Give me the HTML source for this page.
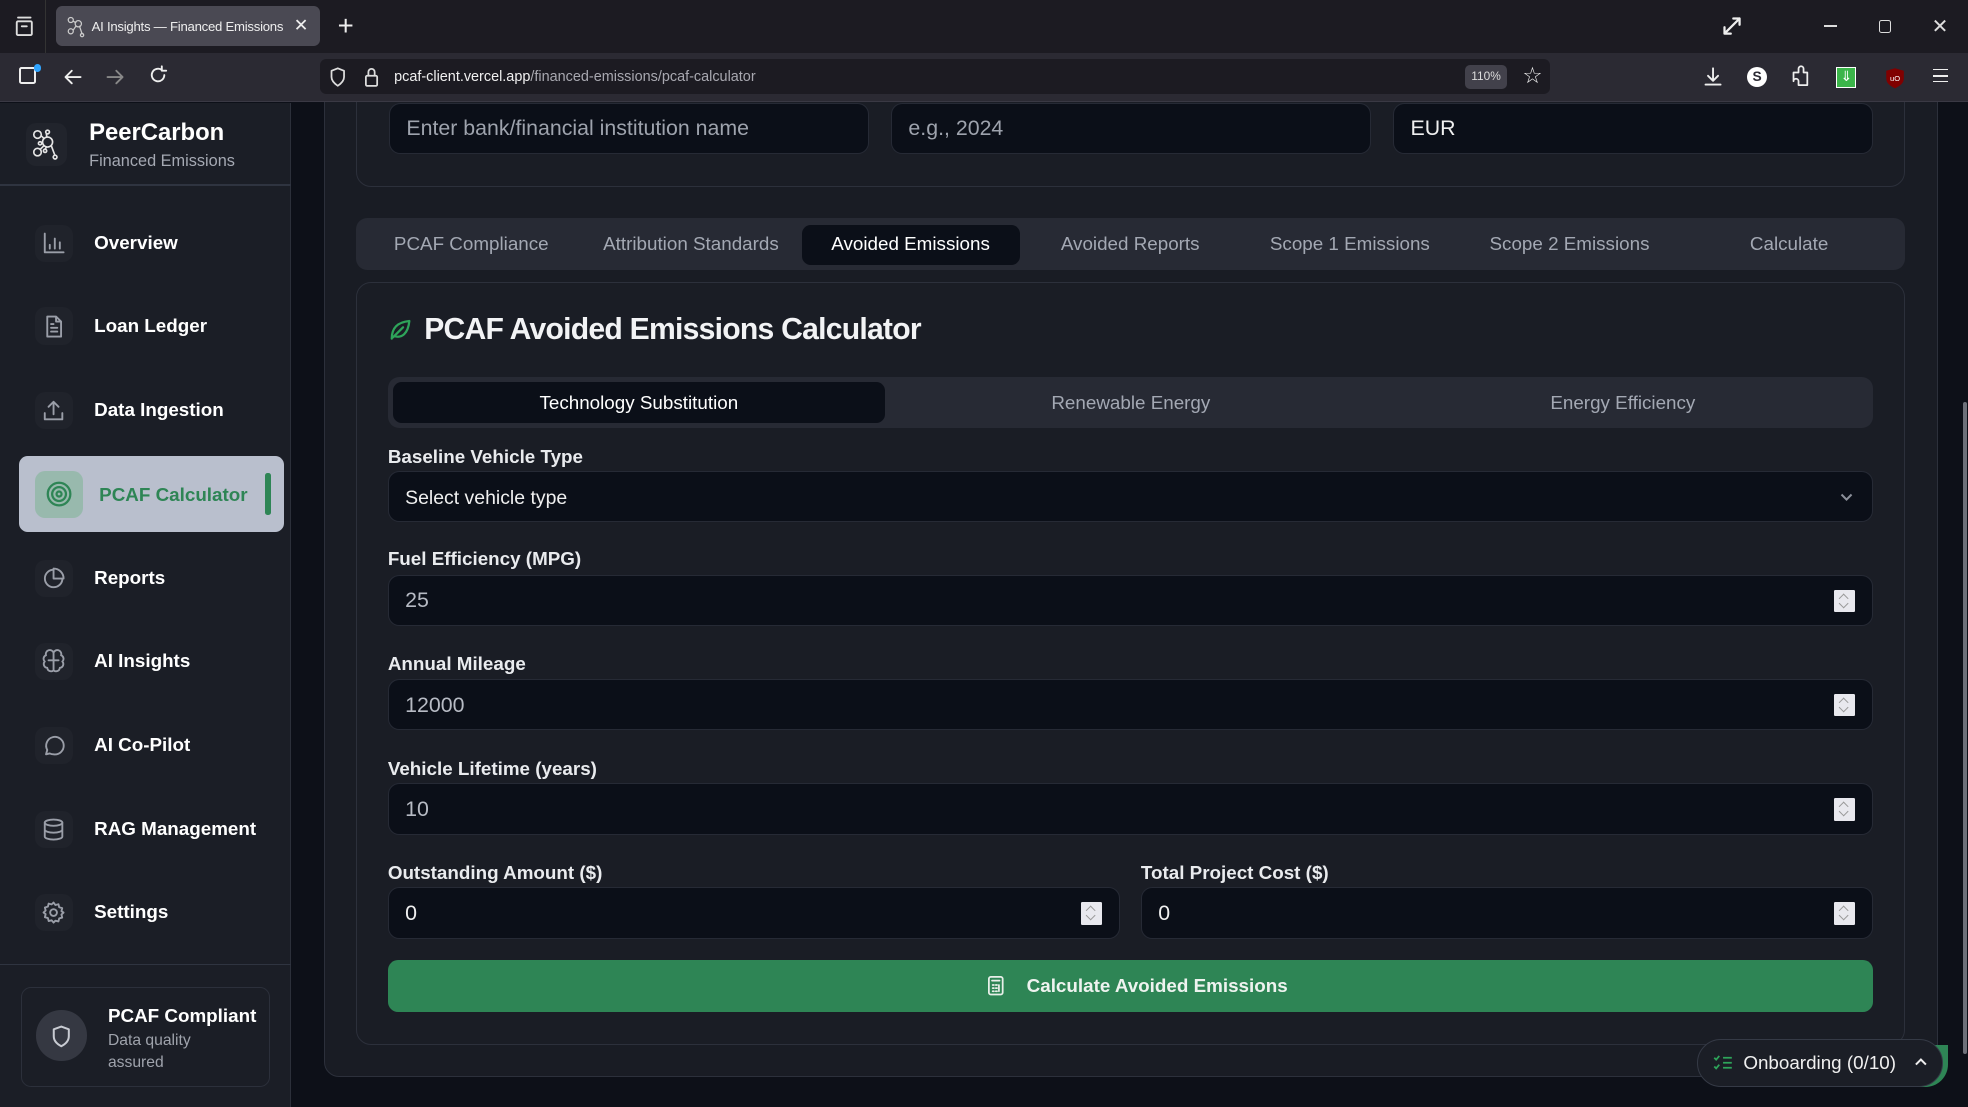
<!DOCTYPE html>
<html><head><meta charset="utf-8"><style>
*{box-sizing:border-box;margin:0;padding:0}
html,body{width:1968px;height:1107px;overflow:hidden;background:#0c0f17;font-family:"Liberation Sans",Arial,sans-serif}
#w{zoom:1.2551;width:1568px;height:882px;position:relative;overflow:hidden;background:#0d1018}
.a{position:absolute}
.ic{stroke:currentColor;fill:none;stroke-width:1.8;stroke-linecap:round;stroke-linejoin:round}
.tb{background:#1c1b22;left:0;top:0;width:1568px;height:42px}
.nb{background:#2b2a33;left:0;top:42px;width:1568px;height:39px;border-bottom:1px solid #3a3944}
.sb{left:0;top:82px;width:232px;height:800px;background:#1b1e26;border-right:1px solid #2c303a}
.nav{left:28px;width:190px;height:40px;color:#fff;font-weight:bold;font-size:15px}
.nav .ib{position:absolute;left:0;top:0;width:30px;height:30px;border-radius:8px;background:#20232b;color:#9a9ea8}
.nav .ib svg{position:absolute;left:5px;top:5px}
.nav span{position:absolute;left:47px;top:6px}
.card{border:1px solid #2c303b;background:#1a1d25;border-radius:12px}
.inp{background:#0b0f18;border:1px solid #262a35;border-radius:9px;height:41px;font-size:17px;color:#b7bbc4;padding:10px 13px}
.lbl{font-size:15px;font-weight:bold;color:#e9ebee}
.sp{position:absolute;right:13px;top:11px;width:17px;height:18px;background:#e8e8ee;border-radius:1px}
.sp:before{content:"";position:absolute;left:5px;top:4px;width:5px;height:5px;border-left:1.5px solid #999;border-top:1.5px solid #999;transform:rotate(45deg)}
.sp:after{content:"";position:absolute;left:5px;top:8px;width:5px;height:5px;border-right:1.5px solid #999;border-bottom:1.5px solid #999;transform:rotate(45deg)}
.tab{top:186px;width:175px;text-align:center;font-size:15px;color:#a3a8b3}
</style></head><body><div id="w">

<div class="a sb"></div>
<div class="a" style="left:0;top:147px;width:232px;height:1px;background:#2f3440"></div>
<div class="a" style="left:21px;top:98px;width:32px;height:34px;border-radius:8px;background:#21242c"></div>
<svg class="a" style="left:24px;top:101px;color:#e5e5e5" width="28" height="28" viewBox="0 0 28 28" fill="none" stroke="currentColor" stroke-width="1.3"><circle cx="6" cy="6" r="3"/><circle cx="14" cy="12" r="4"/><circle cx="6" cy="20" r="3"/><circle cx="14" cy="4" r="1.5"/><circle cx="8" cy="13" r="1.3"/><circle cx="20" cy="24" r="1.5"/><circle cx="12" cy="19" r="1.3"/><path d="M9 7l2 2M13 5.5l0.5 2.5M9.3 13H10M8 18l3-3M17 15l3 8M13 16l-1 2"/></svg>
<div class="a" style="left:71px;top:95px;font-size:19px;font-weight:bold;color:#fff">PeerCarbon</div>
<div class="a" style="left:71px;top:121px;font-size:13px;color:#a5a9b3">Financed Emissions</div>

<div class="a nav" style="top:179px"><div class="ib"><svg width="20" height="20" viewBox="0 0 20 20" class="ic" style="stroke-width:1.5"><path d="M3 2v15h15M7 14v-3M11 14V6M15 14v-5"/></svg></div><span>Overview</span></div>
<div class="a nav" style="top:245px"><div class="ib"><svg width="20" height="20" viewBox="0 0 20 20" class="ic" style="stroke-width:1.5"><path d="M5 2h7l4 4v12H5zM12 2v4h4M8 11h5M8 14h5M8 8h2"/></svg></div><span>Loan Ledger</span></div>
<div class="a nav" style="top:312px"><div class="ib"><svg width="20" height="20" viewBox="0 0 20 20" class="ic" style="stroke-width:1.5"><path d="M3 12v5h14v-5M10 13V3M6 7l4-4 4 4"/></svg></div><span>Data Ingestion</span></div>
<div class="a" style="left:15px;top:363px;width:211px;height:61px;background:#b9bfcd;border-radius:7px"></div>
<div class="a" style="left:28px;top:375px;width:38px;height:38px;border-radius:8px;background:#98b9ad"></div>
<svg class="a" style="left:35px;top:382px;color:#2e8555" width="24" height="24" viewBox="0 0 24 24" fill="none" stroke="currentColor" stroke-width="1.8"><circle cx="12" cy="12" r="9"/><circle cx="12" cy="12" r="5.5"/><circle cx="12" cy="12" r="2"/></svg>
<div class="a" style="left:79px;top:386px;font-size:15px;font-weight:bold;color:#2e8555">PCAF Calculator</div>
<div class="a" style="left:211px;top:377px;width:5px;height:33px;background:#2e8555;border-radius:2px"></div>
<div class="a nav" style="top:446px"><div class="ib"><svg width="20" height="20" viewBox="0 0 20 20" class="ic" style="stroke-width:1.5"><path d="M17 11A7 7 0 119 3M10 2v8h8A8 8 0 0010 2z"/></svg></div><span>Reports</span></div>
<div class="a nav" style="top:512px"><div class="ib"><svg width="20" height="20" viewBox="0 0 20 20" class="ic" style="stroke-width:1.5"><path d="M10 3a3 3 0 00-6 2 3 3 0 00-1 5 3 3 0 002 5 3 3 0 005 2zM10 3a3 3 0 016 2 3 3 0 011 5 3 3 0 01-2 5 3 3 0 01-5 2zM10 3v14M6 9h8"/></svg></div><span>AI Insights</span></div>
<div class="a nav" style="top:579px"><div class="ib"><svg width="20" height="20" viewBox="0 0 20 20" class="ic" style="stroke-width:1.5"><path d="M4 17l1-3.5A7 7 0 1110 17a7 7 0 01-3-.7z"/></svg></div><span>AI Co-Pilot</span></div>
<div class="a nav" style="top:646px"><div class="ib"><svg width="20" height="20" viewBox="0 0 20 20" class="ic" style="stroke-width:1.5"><ellipse cx="10" cy="4.5" rx="7" ry="2.5"/><path d="M3 4.5v11c0 1.4 3 2.5 7 2.5s7-1.1 7-2.5v-11M3 10c0 1.4 3 2.5 7 2.5s7-1.1 7-2.5"/></svg></div><span>RAG Management</span></div>
<div class="a nav" style="top:712px"><div class="ib"><svg width="20" height="20" viewBox="0 0 20 20" class="ic" style="stroke-width:1.5"><circle cx="10" cy="10" r="2.7"/><path d="M10 2l1.5 2 2.4-.6.6 2.4 2.4.7-.6 2.4L18 10l-1.7 1.6.6 2.4-2.4.7-.6 2.4-2.4-.6L10 18l-1.5-1.8-2.4.6-.6-2.4-2.4-.7.6-2.4L2 10l1.7-1.6-.6-2.4 2.4-.7.6-2.4 2.4.6z"/></svg></div><span>Settings</span></div>
<div class="a" style="left:0;top:768px;width:232px;height:1px;background:#2f3440"></div>
<div class="a" style="left:17px;top:786px;width:198px;height:80px;border:1px solid #2c303b;border-radius:8px"></div>
<div class="a" style="left:29px;top:805px;width:40px;height:40px;border-radius:50%;background:#353842"></div>
<svg class="a ic" style="left:40px;top:816px;color:#c8cbd2;stroke-width:1.6" width="18" height="20" viewBox="0 0 18 20"><path d="M9 2l6 2.2v5.5c0 4-3 6.5-6 8-3-1.5-6-4-6-8V4.2z"/></svg>
<div class="a" style="left:86px;top:801px;font-size:15px;font-weight:bold;color:#fff">PCAF Compliant</div>
<div class="a" style="left:86px;top:821px;font-size:12.5px;color:#9fa3ac;line-height:17px">Data quality<br>assured</div>

<div class="a card" style="left:258px;top:40px;width:1286px;height:818px;background:#191c24"></div>
<div class="a card" style="left:284px;top:40px;width:1234px;height:109px"></div>
<div class="a inp" style="left:310px;top:82px;width:382px;color:#9ea3ad">Enter bank/financial institution name</div>
<div class="a inp" style="left:710px;top:82px;width:382px;color:#9ea3ad">e.g., 2024</div>
<div class="a inp" style="left:1110px;top:82px;width:382px;color:#f0f0f0">EUR</div>
<div class="a" style="left:284px;top:174px;width:1234px;height:41px;background:#272a34;border-radius:9px"></div>
<div class="a" style="left:639px;top:179px;width:174px;height:32px;background:#0b0f18;border-radius:7px"></div>
<div class="a tab" style="left:288px">PCAF Compliance</div>
<div class="a tab" style="left:463px">Attribution Standards</div>
<div class="a tab" style="left:638px;color:#fff">Avoided Emissions</div>
<div class="a tab" style="left:813px">Avoided Reports</div>
<div class="a tab" style="left:988px">Scope 1 Emissions</div>
<div class="a tab" style="left:1163px">Scope 2 Emissions</div>
<div class="a tab" style="left:1338px">Calculate</div>

<div class="a card" style="left:284px;top:225px;width:1234px;height:608px"></div>
<svg class="a ic" style="left:309px;top:252px;color:#2ea45a;stroke-width:1.8" width="20" height="20" viewBox="0 0 20 20"><path d="M3 18c0-8 4-13 14-14-1 10-6 14-12 12M4 17l8-8"/></svg>
<div class="a" style="left:338px;top:249px;font-size:24px;font-weight:bold;color:#f2f3f5;letter-spacing:-0.6px">PCAF Avoided Emissions Calculator</div>
<div class="a" style="left:309px;top:300px;width:1183px;height:41px;background:#272a34;border-radius:9px"></div>
<div class="a" style="left:313px;top:304px;width:392px;height:33px;background:#0b0f18;border-radius:7px;color:#fff;font-size:15px;text-align:center;line-height:33px">Technology Substitution</div>
<div class="a" style="left:705px;top:304px;width:392px;height:33px;color:#a3a8b3;font-size:15px;text-align:center;line-height:33px">Renewable Energy</div>
<div class="a" style="left:1097px;top:304px;width:392px;height:33px;color:#a3a8b3;font-size:15px;text-align:center;line-height:33px">Energy Efficiency</div>

<div class="a lbl" style="left:309px;top:355px">Baseline Vehicle Type</div>
<div class="a inp" style="left:309px;top:375px;width:1183px;color:#f0f0f0;font-size:15.5px;padding-top:12px">Select vehicle type<svg style="position:absolute;right:14px;top:16px" width="12" height="8" viewBox="0 0 12 8" fill="none" stroke="#8c909a" stroke-width="1.6"><path d="M2 2l4 4 4-4"/></svg></div>
<div class="a lbl" style="left:309px;top:437px">Fuel Efficiency (MPG)</div>
<div class="a inp" style="left:309px;top:458px;width:1183px">25<div class="sp"></div></div>
<div class="a lbl" style="left:309px;top:520px">Annual Mileage</div>
<div class="a inp" style="left:309px;top:541px;width:1183px">12000<div class="sp"></div></div>
<div class="a lbl" style="left:309px;top:604px">Vehicle Lifetime (years)</div>
<div class="a inp" style="left:309px;top:624px;width:1183px">10<div class="sp"></div></div>
<div class="a lbl" style="left:309px;top:687px">Outstanding Amount ($)</div>
<div class="a inp" style="left:309px;top:707px;width:583px;color:#f0f0f0">0<div class="sp"></div></div>
<div class="a lbl" style="left:909px;top:687px">Total Project Cost ($)</div>
<div class="a inp" style="left:909px;top:707px;width:583px;color:#f0f0f0">0<div class="sp"></div></div>
<div class="a" style="left:309px;top:765px;width:1183px;height:41px;background:#2e8555;border-radius:8px"></div>
<svg class="a ic" style="left:786px;top:777px;color:#e8efe9;stroke-width:1.4" width="14" height="17" viewBox="0 0 14 17"><rect x="1.5" y="1.5" width="11" height="14" rx="1.5"/><path d="M4 4.5h6M4.5 8h1M7 8h1M4.5 10.5h1M7 10.5h1M4.5 13h1M7 13h1M9.5 8v5"/></svg>
<div class="a" style="left:818px;top:777px;font-size:15px;font-weight:bold;color:#eef3ef">Calculate Avoided Emissions</div>

<div class="a" style="left:1564px;top:320px;width:3px;height:520px;background:#6e717a;border-radius:2px"></div>
<div class="a" style="left:1450px;top:833px;width:102px;height:33px;background:#2e8555;border-radius:0 0 18px 0"></div>
<div class="a" style="left:1352px;top:828px;width:196px;height:38px;background:#1b1e26;border:1px solid #353a46;border-radius:19px"></div>
<svg class="a" style="left:1365px;top:840px" width="16" height="14" viewBox="0 0 16 14" fill="none" stroke-width="1.4"><path d="M1 3l1.5 1.5L5 1.5M1 10l1.5 1.5L5 8.5" stroke="#2ea45a"/><path d="M8 3h7M8 7h7M8 11h7" stroke="#2ea45a"/></svg>
<div class="a" style="left:1389px;top:838px;font-size:15px;color:#f0f0f0">Onboarding (0/10)</div>
<svg class="a" style="left:1525px;top:842px" width="11" height="8" viewBox="0 0 11 8" fill="none" stroke="#eee" stroke-width="1.6"><path d="M1.5 6l4-4 4 4"/></svg>

<!-- browser chrome on top -->
<div class="a tb"></div>
<div class="a" style="left:10px;top:12px;color:#ddd"><svg width="18" height="18" viewBox="0 0 18 18" class="ic" style="stroke-width:1.5"><rect x="3" y="5" width="12" height="11" rx="1"/><path d="M4 2h10M7 9h4"/></svg></div>
<div class="a" style="left:36px;top:0;width:1px;height:42px;background:#333"></div>
<div class="a" style="left:45px;top:5px;width:210px;height:32px;background:#4a4953;border-radius:5px"></div>
<div class="a" style="left:53px;top:12px;color:#ccc"><svg width="16" height="18" viewBox="0 0 16 18" class="ic" style="stroke-width:1"><circle cx="3" cy="4" r="2"/><circle cx="9" cy="7" r="2.5"/><circle cx="3" cy="13" r="2"/><circle cx="12" cy="16" r="1.3"/><path d="M5 5l2 1M5 12l2-3M10 9l2 6"/></svg></div>
<div class="a" style="left:73px;top:15px;font-size:10.5px;color:#eee;letter-spacing:-0.2px">AI Insights — Financed Emissions</div>
<div class="a" style="left:234px;top:12px;font-size:14px;color:#eee">✕</div>
<div class="a" style="left:269px;top:8px;font-size:22px;color:#eee;font-weight:300">+</div>
<svg class="a ic" style="left:1372px;top:13px;color:#eee" width="16" height="16" viewBox="0 0 16 16"><path d="M2 14L14 2M9 2h5v5M2 9v5h5"/></svg>
<div class="a" style="left:1453px;top:20px;width:11px;height:1.5px;background:#ddd"></div>
<div class="a" style="left:1497px;top:16px;width:10px;height:10px;border:1.5px solid #ddd;border-radius:2px"></div>
<div class="a" style="left:1539px;top:11px;font-size:16px;color:#ddd">✕</div>
<div class="a nb"></div>
<div class="a" style="left:15px;top:53px;width:14px;height:14px;border:2px solid #eee;border-radius:2px"></div>
<div class="a" style="left:27px;top:51px;width:6px;height:6px;background:#2fa4ff;border-radius:50%"></div>
<svg class="a ic" style="left:50px;top:53px;color:#eee;stroke-width:1.5" width="16" height="16" viewBox="0 0 16 16"><path d="M14 8H2M7 3L2 8l5 5"/></svg>
<svg class="a ic" style="left:84px;top:53px;color:#888;stroke-width:1.5" width="16" height="16" viewBox="0 0 16 16"><path d="M2 8h12M9 3l5 5-5 5"/></svg>
<svg class="a ic" style="left:118px;top:52px;color:#eee;stroke-width:1.5" width="16" height="16" viewBox="0 0 16 16"><path d="M13 8a5 5 0 11-2-4M11 1v3.5h3.5"/></svg>
<div class="a" style="left:255px;top:47px;width:980px;height:28px;background:#1c1b22;border-radius:5px"></div>
<svg class="a ic" style="left:262px;top:53px;color:#ddd;stroke-width:1.4" width="14" height="16" viewBox="0 0 14 16"><path d="M7 1l5 2v5c0 3-2 5-5 7-3-2-5-4-5-7V3z"/></svg>
<svg class="a ic" style="left:290px;top:53px;color:#ddd;stroke-width:1.4" width="12" height="16" viewBox="0 0 12 16"><rect x="1.5" y="7" width="9" height="8" rx="1"/><path d="M3.5 7V4a2.5 2.5 0 015 0v3"/></svg>
<div class="a" style="left:314px;top:55px;font-size:11.5px;color:#f0f0f0">pcaf-client.vercel.app<span style="color:#a8a8b0">/financed-emissions/pcaf-calculator</span></div>
<div class="a" style="left:1167px;top:52px;width:34px;height:19px;background:#42414b;border-radius:4px;font-size:9.5px;color:#ddd;text-align:center;line-height:19px">110%</div>
<div class="a" style="left:1213px;top:50px;font-size:18px;color:#eee">☆</div>
<svg class="a ic" style="left:1357px;top:53px;color:#eee;stroke-width:1.5" width="16" height="16" viewBox="0 0 16 16"><path d="M8 1v10M4 7l4 4 4-4M2 14h12"/></svg>
<div class="a" style="left:1392px;top:53px;width:16px;height:16px;border-radius:50%;background:#fff;color:#2b2a33;font-size:11px;font-weight:bold;text-align:center;line-height:16px">S</div>
<svg class="a ic" style="left:1427px;top:52px;color:#eee;stroke-width:1.4" width="16" height="18" viewBox="0 0 16 18"><path d="M2 6h4V3a2 2 0 014 0v3h3v10H6v-3a2 2 0 00-4 0z"/></svg>
<div class="a" style="left:1463px;top:53px;width:16px;height:17px;background:#3bb54a;border:1.5px solid #fff;color:#fff;font-size:11px;text-align:center;line-height:14px">⇓</div>
<svg class="a" style="left:1502px;top:53px" width="16" height="18" viewBox="0 0 16 18"><path d="M8 1l7 2v6c0 4-3 6-7 8-4-2-7-4-7-8V3z" fill="#800000"/><text x="8" y="11" font-size="6" fill="#fff" text-anchor="middle" font-family="Liberation Sans">uO</text></svg>
<div class="a" style="left:1540px;top:55px;width:12px;height:10px;border-top:1.5px solid #eee;border-bottom:1.5px solid #eee"></div>
<div class="a" style="left:1540px;top:59.5px;width:12px;height:1.5px;background:#eee"></div>
</div></body></html>
